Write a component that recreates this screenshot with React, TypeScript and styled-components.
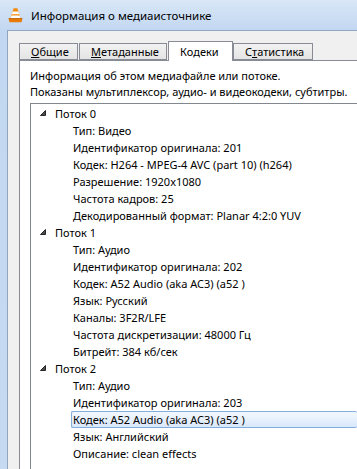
import React from "react";
import styled, { createGlobalStyle } from "styled-components";

const GlobalStyle = createGlobalStyle`
  html, body {
    margin: 0;
    padding: 0;
    overflow: hidden;
  }
  body {
    font-family: "Noto Sans", "Liberation Sans", sans-serif;
    font-size: 11px;
    color: #000;
  }
`;

const Window = styled.div`
  width: 357px;
  height: 469px;
  display: flex;
  flex-direction: column;
  overflow: hidden;
  background: linear-gradient(to bottom, #d9e7f7 0px, #c2d7f1 30px, #c6daf1 100%);
`;

const TitleBar = styled.div`
  height: 30px;
  flex: none;
  display: flex;
  align-items: center;
  gap: 8px;
  padding-left: 8px;
`;

const Title = styled.span`
  font-size: 11.5px;
  color: #000;
  white-space: nowrap;
`;

const Client = styled.div`
  flex: 1;
  min-height: 0;
  margin-left: 7px;
  border-left: 1px solid #8fa5c0;
  border-top: 1px solid #8fa5c0;
  background: #f0f0f0;
  padding: 10px 0 0 11px;
  display: flex;
  flex-direction: column;
`;

const TabBar = styled.div`
  height: 19px;
  flex: none;
  display: flex;
  align-items: flex-end;
`;

const Tab = styled.div<{ $w: number; $active?: boolean }>`
  box-sizing: border-box;
  width: ${(p) => p.$w}px;
  height: ${(p) => (p.$active ? 20 : 17)}px;
  margin-bottom: ${(p) => (p.$active ? -1 : 0)}px;
  margin-right: ${(p) => (p.$active ? 0 : 1)}px;
  position: relative;
  z-index: ${(p) => (p.$active ? 1 : 0)};
  padding-left: 11px;
  display: flex;
  align-items: center;
  border: 1px solid #898c95;
  border-bottom: ${(p) => (p.$active ? "none" : "1px solid #898c95")};
  background: ${(p) =>
    p.$active ? "#fff" : "linear-gradient(to bottom, #f2f2f2, #e4e4e4)"};
  white-space: nowrap;
  line-height: 15px;
`;

const Panel = styled.div`
  flex: 1;
  min-height: 0;
  background: #fff;
  border-left: 1px solid #898c95;
  border-top: 1px solid #898c95;
  padding: 7px 0 0 10px;
  display: flex;
  flex-direction: column;
`;

const Intro = styled.div`
  line-height: 16px;
  white-space: nowrap;
`;

const Tree = styled.div`
  flex: 1;
  margin-top: 3px;
  border-left: 1px solid #828790;
  border-top: 1px solid #828790;
  padding-top: 1px;
`;

const Row = styled.div<{ $child?: boolean }>`
  height: 17px;
  display: flex;
  align-items: stretch;
  padding-left: ${(p) => (p.$child ? 40 : 4)}px;
  white-space: nowrap;
`;

const Arrow = styled.svg`
  width: 16px;
  height: 17px;
  flex: none;
  margin-right: 2px;
`;

const Label = styled.span<{ $selected?: boolean }>`
  display: flex;
  align-items: center;
  padding: 0 1px;
  border: 1px solid ${(p) => (p.$selected ? "#84acdd" : "transparent")};
  border-radius: 2px;
  border-right: ${(p) => (p.$selected ? "none" : "1px solid transparent")};
  flex: ${(p) => (p.$selected ? 1 : "none")};
  background: ${(p) =>
    p.$selected ? "linear-gradient(to bottom, #f3f8fe, #d9e8fb)" : "none"};
`;

const VlcIcon = () => (
  <svg width="15" height="16" viewBox="0 0 15 16">
    <path d="M5.6 1.2 h3.8 l3.2 10.3 h-10.2 z" fill="#f28a0c" />
    <path d="M4.7 4.4 h5.6 l0.9 2.9 h-7.4 z" fill="#fff" />
    <path d="M3.5 8.5 h8 l0.8 2.4 h-9.6 z" fill="#fff" />
    <path d="M0.6 11.6 h13.8 l-0.9 3.6 h-12 z" fill="#e77b06" />
    <path d="M0.6 11.6 h13.8" stroke="#b85e00" strokeWidth="0.8" />
  </svg>
);

const Expander = () => (
  <Arrow viewBox="0 0 16 17">
    <path d="M10.5 5.5 V10.5 H5.5 Z" fill="#4d4d4d" stroke="#262626" strokeWidth="1" strokeLinejoin="round" />
  </Arrow>
);

type Stream = { name: string; items: string[]; selected?: number };

const streams: Stream[] = [
  {
    name: "Поток 0",
    items: [
      "Тип: Видео",
      "Идентификатор оригинала: 201",
      "Кодек: H264 - MPEG-4 AVC (part 10) (h264)",
      "Разрешение: 1920x1080",
      "Частота кадров: 25",
      "Декодированный формат: Planar 4:2:0 YUV",
    ],
  },
  {
    name: "Поток 1",
    items: [
      "Тип: Аудио",
      "Идентификатор оригинала: 202",
      "Кодек: A52 Audio (aka AC3) (a52 )",
      "Язык: Русский",
      "Каналы: 3F2R/LFE",
      "Частота дискретизации: 48000 Гц",
      "Битрейт: 384 кб/сек",
    ],
  },
  {
    name: "Поток 2",
    items: [
      "Тип: Аудио",
      "Идентификатор оригинала: 203",
      "Кодек: A52 Audio (aka AC3) (a52 )",
      "Язык: Английский",
      "Описание: clean effects",
    ],
    selected: 2,
  },
];

export default function App() {
  return (
    <>
      <GlobalStyle />
      <Window>
        <TitleBar>
          <VlcIcon />
          <Title>Информация о медиаисточнике</Title>
        </TitleBar>
        <Client>
          <TabBar>
            <Tab $w={59}>
              <u>О</u>бщие
            </Tab>
            <Tab $w={88}>
              <u>М</u>етаданные
            </Tab>
            <Tab $w={65} $active>
              Ко<u>д</u>еки
            </Tab>
            <Tab $w={80}>
              С<u>т</u>атистика
            </Tab>
          </TabBar>
          <Panel>
            <Intro>
              Информация об этом медиафайле или потоке.
              <br />
              Показаны мультиплексор, аудио- и видеокодеки, субтитры.
            </Intro>
            <Tree>
              {streams.map((s) => (
                <React.Fragment key={s.name}>
                  <Row>
                    <Expander />
                    <Label>{s.name}</Label>
                  </Row>
                  {s.items.map((item, i) => (
                    <Row $child key={item}>
                      <Label $selected={s.selected === i}>{item}</Label>
                    </Row>
                  ))}
                </React.Fragment>
              ))}
            </Tree>
          </Panel>
        </Client>
      </Window>
    </>
  );
}
